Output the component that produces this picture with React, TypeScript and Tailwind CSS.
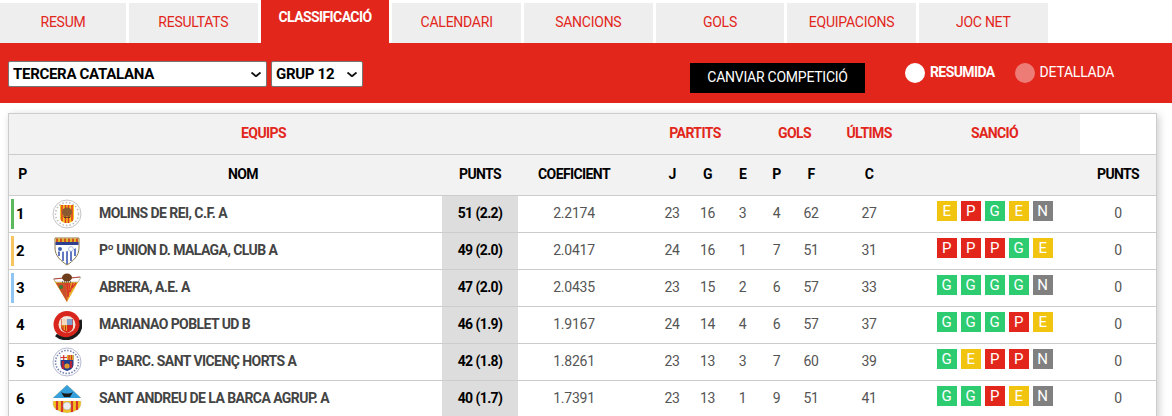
const tabs = ["RESUM", "RESULTATS", "CLASSIFICACIÓ", "CALENDARI", "SANCIONS", "GOLS", "EQUIPACIONS", "JOC NET"]

function Molins() {
  return (
    <svg viewBox="0 0 30 30" className="h-[30px] w-[30px]">
      <circle cx="15" cy="15" r="14" fill="#fff" stroke="#c4c4c4" />
      <circle cx="15" cy="15" r="11.5" fill="none" stroke="#bbb" strokeWidth="1.5" strokeDasharray="1.5 2" />
      <path d="M8 6h14v13c0 3-3 5-7 5s-7-2-7-5z" fill="#f5c518" />
      <path d="M10 6v16M13.5 6v18M16.5 6v18M20 6v16" stroke="#e0352a" strokeWidth="1.5" />
      <ellipse cx="15" cy="13" rx="5" ry="4.5" fill="#8a5a30" />
      <path d="M11 16c2 3 6 3 8 0l-1 3h-6z" fill="#5a3a20" />
    </svg>
  )
}

function Union() {
  return (
    <svg viewBox="0 0 30 30" className="h-[30px] w-[30px]">
      <path d="M3 2h24v10c0 8-6 13-12 17C9 25 3 20 3 12z" fill="#fff" stroke="#8a7a50" />
      <path d="M3.500 2.500h23V6h-23z" fill="#e2b52a" />
      <path d="M5 2.500V6M9 2.500V6M13 2.500V6M17 2.500V6M21 2.500V6M25 2.500V6" stroke="#c9341f" strokeWidth="1.500" />
      <path d="M3.500 6h23v3h-23z" fill="#2f3f8f" />
      <path d="M15 15v13M19 13v12M11 15v10M7 14v6M23 12v8" stroke="#4a62b8" strokeWidth="1.700" />
      <path d="M4 13c7 2 15-1 22-4v2C19 15 11 17 4 15z" fill="#fff" />
      <circle cx="8" cy="13" r="2" fill="#3f5fb0" />
      <circle cx="19" cy="13" r="2.400" fill="#fff" stroke="#8ca0d0" strokeWidth="0.700" />
    </svg>
  )
}

function Abrera() {
  return (
    <svg viewBox="0 0 30 30" className="h-[30px] w-[30px]">
      <path d="M1 6l28-2-14 25z" fill="#e8b021" />
      <path d="M1 6l10-1h8l10-1-3 5H4z" fill="#fff" stroke="#999" strokeWidth="0.500" />
      <path d="M2 6l10-1M18 5l10-1" stroke="#b4443a" strokeWidth="1" />
      <path d="M15 29l-1-19h3z" fill="#d8342a" />
      <path d="M18 10l-2 14M21 10l-3 9M24 10l-4 5" stroke="#d8342a" strokeWidth="1.400" />
      <path d="M4 10h10l1 19z" fill="#c9502a" />
      <circle cx="9" cy="14" r="2" fill="#3d7a3a" />
      <ellipse cx="15" cy="4.500" rx="5" ry="4" fill="#6d3d1c" />
      <path d="M10 9h10" stroke="#333" strokeWidth="1" strokeDasharray="1 1" />
    </svg>
  )
}

function Marianao() {
  return (
    <svg viewBox="0 0 30 30" className="h-[30px] w-[30px]">
      <circle cx="15" cy="14.500" r="13.500" fill="#d9261c" />
      <path d="M4 25c6 5 14 5 20 0 5-4 6-11 4-15" fill="none" stroke="#1a1a1a" strokeWidth="3" />
      <circle cx="15" cy="14.500" r="8.500" fill="#f0e6d8" />
      <path d="M9 9h12v8c0 3-3 5-6 6-3-1-6-3-6-6z" fill="#d9261c" />
      <path d="M9.500 9H15v6H9.500z" fill="#f4d9c0" />
      <path d="M15 9h5.500v6H15z" fill="#7f9fd0" />
      <path d="M9.500 15H15v6l-3-1-2.500-3z" fill="#e3a92a" />
      <path d="M11 15.500v4M13.500 15.500v5" stroke="#c9261c" strokeWidth="1" />
    </svg>
  )
}

function Barca() {
  return (
    <svg viewBox="0 0 30 30" className="h-[30px] w-[30px]">
      <circle cx="15" cy="15" r="14" fill="#fff" stroke="#b6bcd0" />
      <circle cx="15" cy="15" r="11.500" fill="none" stroke="#7a84b0" strokeWidth="1.600" strokeDasharray="1.500 1.500" />
      <path d="M8.500 8h13v9c0 4-3 6-6.500 7-3.500-1-6.500-3-6.500-7z" fill="#1f3f8c" />
      <path d="M8.500 8H15v5H8.500z" fill="#f2f2f2" />
      <path d="M15 8h6.500v5H15z" fill="#e0b52a" />
      <path d="M11.700 8v5M8.500 10.500H15" stroke="#d8342a" strokeWidth="1.200" />
      <path d="M17 8v5M19.500 8v5" stroke="#d8342a" strokeWidth="1.200" />
      <path d="M11 14v8M19 14v7" stroke="#b3203a" strokeWidth="2.400" />
      <circle cx="15" cy="19" r="2.600" fill="#e09a30" />
    </svg>
  )
}

function SantAndreu() {
  return (
    <svg viewBox="0 0 30 30" className="h-[30px] w-[30px]">
      <path d="M15 1l14 13v6c0 5-6 8-14 9-8-1-14-4-14-9v-6z" fill="#f0c01e" stroke="#ccc" strokeWidth="0.500" />
      <path d="M15 1l14 13H1z" fill="#35a0dc" />
      <path d="M9 8c3 2 9 2 12 0l-3 5h-6z" fill="#1a1a1a" />
      <path d="M1 14h28v3H1z" fill="#fff" />
      <path d="M5 17v9M10 17v11M20 17v11M25 17v9" stroke="#d8342a" strokeWidth="2.200" />
      <circle cx="15" cy="22" r="4" fill="#eee" stroke="#999" strokeWidth="0.500" />
    </svg>
  )
}

function Chevron() {
  return (
    <svg viewBox="0 0 10 5" className="pointer-events-none absolute right-[6px] top-[11px] h-[5px] w-[10px]">
      <path d="M0.500 0.500L5 4.300L9.500 0.500" fill="none" stroke="#111" strokeWidth="1.800" />
    </svg>
  )
}

const teams = [
  { pos: 1, bar: "bg-[#5cb85c]", Crest: Molins, name: "MOLINS DE REI, C.F. A", pts: "51 (2.2)", coef: "2.2174", j: 23, g: 16, e: 3, p: 4, f: 62, c: 27, last: "EPGEN" },
  { pos: 2, bar: "bg-[#f8c45f]", Crest: Union, name: "Pº UNION D. MALAGA, CLUB A", pts: "49 (2.0)", coef: "2.0417", j: 24, g: 16, e: 1, p: 7, f: 51, c: 31, last: "PPPGE" },
  { pos: 3, bar: "bg-[#8fc5f2]", Crest: Abrera, name: "ABRERA, A.E. A", pts: "47 (2.0)", coef: "2.0435", j: 23, g: 15, e: 2, p: 6, f: 57, c: 33, last: "GGGGN" },
  { pos: 4, bar: "", Crest: Marianao, name: "MARIANAO POBLET UD B", pts: "46 (1.9)", coef: "1.9167", j: 24, g: 14, e: 4, p: 6, f: 57, c: 37, last: "GGGPE" },
  { pos: 5, bar: "", Crest: Barca, name: "Pº BARC. SANT VICENÇ HORTS A", pts: "42 (1.8)", coef: "1.8261", j: 23, g: 13, e: 3, p: 7, f: 60, c: 39, last: "GEPPN" },
  { pos: 6, bar: "", Crest: SantAndreu, name: "SANT ANDREU DE LA BARCA AGRUP. A", pts: "40 (1.7)", coef: "1.7391", j: 23, g: 13, e: 1, p: 9, f: 51, c: 41, last: "GGPEN" },
]

const badgeColors: Record<string, string> = {
  G: "bg-[#2ecc71]",
  E: "bg-[#f1c40f]",
  P: "bg-[#e2261b]",
  N: "bg-[#808080]",
}

const top = "h-[41px] border-b border-[#ccc] bg-[#f2f2f2] pb-[2px] text-[14px] font-bold tracking-[-0.6px] text-[#e2261b]"
const head = "h-[41px] border-b border-[#ccc] bg-[#f2f2f2] pb-[1px] text-[14px] font-bold tracking-[-0.6px] text-black"
const cell = "h-[37px] border-b border-[#ccc] pb-[1px] text-center text-[14px] text-[#555]"

export default function App() {
  return (
    <div className="h-[416px] w-[1172px] overflow-hidden bg-white font-['Roboto',sans-serif] tracking-[-0.25px]">
      {/* Tabs */}
      <div className="flex h-[43px] items-end gap-[3px]">
        {tabs.map((tab, i) =>
          tab === "CLASSIFICACIÓ" ? (
            <div key={tab} className="flex h-[43px] w-[128.67px] items-start justify-center bg-[#e2261b] pt-[7px] text-[14px] font-bold tracking-[-0.6px] text-white">
              {tab}
            </div>
          ) : (
            <div key={tab} className={`flex h-[40px] items-center justify-center bg-[#eee] pb-[2px] text-[14px] text-[#e2261b] ${i === 0 ? "w-[126px]" : "w-[128.67px]"}`}>
              {tab}
            </div>
          ),
        )}
      </div>

      {/* Filters */}
      <div className="flex h-[60px] items-start bg-[#e2261b] pl-2">
        <div className="relative mt-[18px] h-[26px] w-[259px]">
          <select className="h-full w-full appearance-none rounded-[2px] border border-[#767676] bg-white pl-1 text-[15px] font-bold tracking-[-0.3px] text-black">
            <option>TERCERA CATALANA</option>
          </select>
          <Chevron />
        </div>
        <div className="relative ml-1 mt-[18px] h-[26px] w-[92px]">
          <select className="h-full w-full appearance-none rounded-[2px] border border-[#767676] bg-white pl-1 text-[15px] font-bold tracking-[-0.3px] text-black">
            <option>GRUP 12</option>
          </select>
          <Chevron />
        </div>
        <button className="ml-[327px] mt-5 h-[30px] w-[175px] bg-black pb-[2px] text-[14px] text-white">CANVIAR COMPETICIÓ</button>
        <div className="ml-10 mt-5 flex h-5 items-center gap-[5px] pb-[2px] text-[14px] font-bold tracking-[-0.6px] text-white">
          <span className="mt-[2px] h-5 w-5 rounded-full bg-white" />
          RESUMIDA
        </div>
        <div className="ml-5 mt-5 flex h-5 items-center gap-[5px] pb-[2px] text-[14px] text-white">
          <span className="mt-[2px] h-5 w-5 rounded-full bg-white/40" />
          DETALLADA
        </div>
      </div>

      {/* Table */}
      <div className="ml-2 mt-[10px] w-[1149px] border border-[#ccc] shadow-[2px_2px_8px_rgba(0,0,0,0.2)]">
        <table className="w-full table-fixed border-separate border-spacing-0">
          <colgroup>
            <col className="w-[35px]" />
            <col className="w-[46px]" />
            <col className="w-[352px]" />
            <col className="w-[76px]" />
            <col className="w-[112px]" />
            <col className="w-[60px]" />
            <col className="w-[35px]" />
            <col className="w-[35px]" />
            <col className="w-[33px]" />
            <col className="w-[36px]" />
            <col className="w-[80px]" />
            <col className="w-[171px]" />
            <col />
          </colgroup>
          <thead>
            <tr>
              <th colSpan={4} className={top}>EQUIPS</th>
              <th className={top} />
              <th colSpan={3} className={top}>PARTITS</th>
              <th colSpan={2} className={top}>GOLS</th>
              <th className={top}>ÚLTIMS</th>
              <th className={top}>SANCIÓ</th>
              <th className="h-[41px] border-b border-[#ccc] bg-white" />
            </tr>
            <tr>
              <th className={`${head} pr-2`}>P</th>
              <th colSpan={2} className={head}>NOM</th>
              <th className={head}>PUNTS</th>
              <th className={head}>COEFICIENT</th>
              <th className={`${head} pl-6`}>J</th>
              <th className={head}>G</th>
              <th className={head}>E</th>
              <th className={head}>P</th>
              <th className={head}>F</th>
              <th className={head}>C</th>
              <th className={head} />
              <th className={head}>PUNTS</th>
            </tr>
          </thead>
          <tbody>
            {teams.map((t) => (
              <tr key={t.pos}>
                <td className="h-[37px] border-b border-[#ccc] pl-[2px]">
                  <div className="flex items-center gap-[2px] text-[15px] font-bold text-black">
                    <span className={`h-[30px] w-[3px] ${t.bar}`} />
                    {t.pos}
                  </div>
                </td>
                <td className="h-[37px] border-b border-[#ccc] pl-[8px]">
                  <t.Crest />
                </td>
                <td className="h-[37px] border-b border-[#ccc] pb-[1px] pl-[9px] text-[14px] font-bold tracking-[-0.57px] text-[#444]">{t.name}</td>
                <td className={`${cell} bg-[#ddd] font-bold tracking-[-0.6px] text-black`}>{t.pts}</td>
                <td className={cell}>{t.coef}</td>
                <td className={`${cell} pl-6`}>{t.j}</td>
                <td className={cell}>{t.g}</td>
                <td className={cell}>{t.e}</td>
                <td className={cell}>{t.p}</td>
                <td className={cell}>{t.f}</td>
                <td className={cell}>{t.c}</td>
                <td className="h-[37px] border-b border-[#ccc] pb-[6px]">
                  <div className="flex justify-center gap-1">
                    {t.last.split("").map((r, i) => (
                      <span key={i} className={`flex h-5 w-5 items-center justify-center text-[15px] text-white ${badgeColors[r]}`}>
                        {r}
                      </span>
                    ))}
                  </div>
                </td>
                <td className={cell}>0</td>
              </tr>
            ))}
          </tbody>
        </table>
      </div>
    </div>
  )
}
